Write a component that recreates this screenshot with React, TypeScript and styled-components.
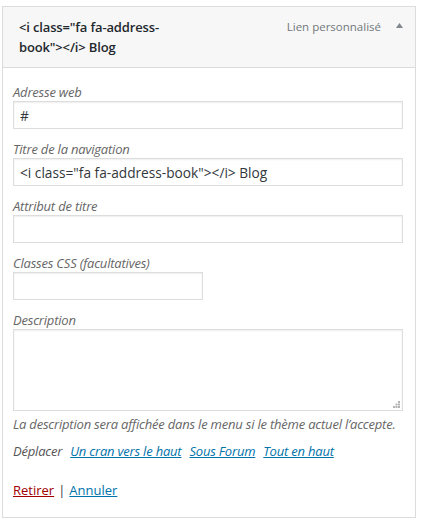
import React from "react";
import styled, { createGlobalStyle } from "styled-components";

const Global = createGlobalStyle`
  html, body { margin: 0; padding: 0; background: #ffffff; }
  body { font-family: "Open Sans", "Noto Sans", sans-serif; color: #32373c; }
  * { box-sizing: border-box; }
`;

const Page = styled.div`
  padding: 6px 0 0 2px;
`;

const Panel = styled.div`
  width: 414px;
  border: 1px solid #dcdcdc;
  background: #ffffff;
`;

const Handle = styled.div`
  display: flex;
  align-items: flex-start;
  justify-content: space-between;
  background: #f7f7f7;
  border-bottom: 1px solid #dcdcdc;
  padding: 10px 12px 10px 16px;
`;

const ItemTitle = styled.div`
  max-width: 152px;
  font-size: 13px;
  font-weight: 600;
  line-height: 20px;
  color: #23282d;
  letter-spacing: -0.15px;
`;

const Controls = styled.div`
  display: flex;
  align-items: center;
  gap: 15px;
  height: 20px;
`;

const ItemType = styled.span`
  font-size: 11.5px;
  color: #72777c;
  line-height: 20px;
`;

const Toggle = styled.svg`
  width: 7px;
  height: 5px;
  margin-top: -3px;
  display: block;
`;

const Settings = styled.div`
  display: flex;
  flex-direction: column;
  padding: 15px 12px 0 10px;
`;

const Field = styled.div`
  display: flex;
  flex-direction: column;
  margin-bottom: 11px;
`;

const Label = styled.label`
  font-size: 13px;
  font-style: italic;
  line-height: 18px;
  color: #666666;
  letter-spacing: -0.2px;
`;

const TextInput = styled.input<{ $narrow?: boolean }>`
  width: ${(p) => (p.$narrow ? "190px" : "390px")};
  height: 28px;
  margin: 0;
  padding: 2px 6px;
  border: 1px solid #dddddd;
  box-shadow: inset 0 1px 2px rgba(0, 0, 0, 0.07);
  background: #ffffff;
  font-family: "Open Sans", "Noto Sans", sans-serif;
  font-size: 13.7px;
  color: #32373c;
  outline: none;
`;

const AreaWrap = styled.div`
  position: relative;
  width: 390px;
  height: 82px;
`;

const TextArea = styled.textarea`
  width: 390px;
  height: 82px;
  margin: 0;
  display: block;
  border: 1px solid #dddddd;
  box-shadow: inset 0 1px 2px rgba(0, 0, 0, 0.07);
  resize: none;
  font-family: "Open Sans", "Noto Sans", sans-serif;
  font-size: 14px;
  outline: none;
`;

const Grip = styled.svg`
  position: absolute;
  right: 3px;
  bottom: 3px;
  width: 7px;
  height: 7px;
`;

const Help = styled.p`
  margin: 4px 0 0;
  font-size: 13px;
  font-style: italic;
  line-height: 18px;
  color: #666666;
  letter-spacing: -0.2px;
  white-space: nowrap;
`;

const MoveRow = styled.div`
  display: flex;
  gap: 8px;
  margin-top: 9px;
  font-size: 13px;
  font-style: italic;
  line-height: 18px;
  letter-spacing: -0.2px;
`;

const MoveLabel = styled.span`
  color: #555555;
`;

const MoveLink = styled.a`
  color: #0073aa;
  text-decoration: underline;
`;

const Actions = styled.div`
  margin-top: 10px;
  padding-bottom: 18px;
  font-size: 13px;
  line-height: 18px;
  color: #32373c;
`;

const ActionLink = styled.a<{ $danger?: boolean }>`
  color: ${(p) => (p.$danger ? "#a00000" : "#0073aa")};
  text-decoration: underline;
`;

const Sep = styled.span`
  margin: 0 4px;
`;

const fields = [
  { label: "Adresse web", value: "#" },
  { label: "Titre de la navigation", value: '<i class="fa fa-address-book"></i> Blog' },
  { label: "Attribut de titre", value: "" },
  { label: "Classes CSS (facultatives)", value: "", narrow: true },
];

export default function App() {
  return (
    <Page>
      <Global />
      <Panel>
        <Handle>
          <ItemTitle>{'<i class="fa fa-address-book"></i> Blog'}</ItemTitle>
          <Controls>
            <ItemType>Lien personnalisé</ItemType>
            <Toggle viewBox="0 0 7 5">
              <polygon points="3.5,0 7,5 0,5" fill="#82878c" />
            </Toggle>
          </Controls>
        </Handle>
        <Settings>
          {fields.map((f) => (
            <Field key={f.label}>
              <Label>{f.label}</Label>
              <TextInput $narrow={f.narrow} defaultValue={f.value} />
            </Field>
          ))}
          <Field>
            <Label>Description</Label>
            <AreaWrap>
              <TextArea />
              <Grip viewBox="0 0 7 7">
                <rect x="5" y="0" width="2" height="2" fill="#b4b4b4" />
                <rect x="2.5" y="2.5" width="2" height="2" fill="#b4b4b4" />
                <rect x="5" y="2.5" width="2" height="2" fill="#b4b4b4" />
                <rect x="0" y="5" width="2" height="2" fill="#b4b4b4" />
                <rect x="2.5" y="5" width="2" height="2" fill="#b4b4b4" />
                <rect x="5" y="5" width="2" height="2" fill="#b4b4b4" />
              </Grip>
            </AreaWrap>
            <Help>La description sera affichée dans le menu si le thème actuel l’accepte.</Help>
            <MoveRow>
              <MoveLabel>Déplacer</MoveLabel>
              <MoveLink href="#">Un cran vers le haut</MoveLink>
              <MoveLink href="#">Sous Forum</MoveLink>
              <MoveLink href="#">Tout en haut</MoveLink>
            </MoveRow>
          </Field>
          <Actions>
            <ActionLink $danger href="#">Retirer</ActionLink>
            <Sep>|</Sep>
            <ActionLink href="#">Annuler</ActionLink>
          </Actions>
        </Settings>
      </Panel>
    </Page>
  );
}
